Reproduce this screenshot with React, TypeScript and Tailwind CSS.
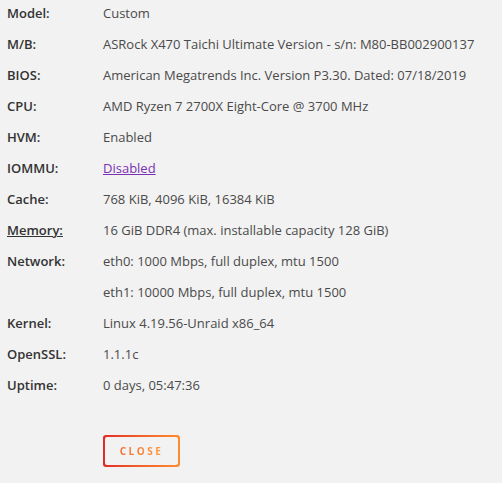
import React from "react";

const rows: [string, React.ReactNode][] = [
  ["Model:", "Custom"],
  ["M/B:", "ASRock X470 Taichi Ultimate Version - s/n: M80-BB002900137"],
  ["BIOS:", "American Megatrends Inc. Version P3.30. Dated: 07/18/2019"],
  ["CPU:", "AMD Ryzen 7 2700X Eight-Core @ 3700 MHz"],
  ["HVM:", "Enabled"],
  ["IOMMU:", <a href="#" className="text-[#7b2fb3] underline">Disabled</a>],
  ["Cache:", "768 KiB, 4096 KiB, 16384 KiB"],
  ["Memory:", "16 GiB DDR4 (max. installable capacity 128 GiB)"],
  ["Network:", "eth0: 1000 Mbps, full duplex, mtu 1500"],
  ["", "eth1: 10000 Mbps, full duplex, mtu 1500"],
  ["Kernel:", "Linux 4.19.56-Unraid x86_64"],
  ["OpenSSL:", "1.1.1c"],
  ["Uptime:", "0 days, 05:47:36"],
];

export default function App() {
  return (
    <div className="w-[502px] h-[483px] bg-[#f2f2f2] font-['Open_Sans',sans-serif] text-[13px] text-[#4a4a4a] overflow-hidden">
      <div className="pl-[7px] -mt-[2px]">
        {rows.map(([label, value], i) => (
          <div key={i} className="flex leading-[31px]">
            <div className={`w-[96px] font-semibold text-[#333] ${label === "Memory:" ? "underline" : ""}`}>
              {label}
            </div>
            <div>{value}</div>
          </div>
        ))}
      </div>
      <div className="pl-[103px] mt-[34px]">
        <div className="inline-block rounded-[3px] p-[2px] bg-gradient-to-r from-[#e22828] to-[#ff8c2f]">
          <button className="w-[73px] h-[28px] rounded-[2px] bg-[#f2f2f2] text-[10px] font-bold tracking-[2.5px] leading-none">
            <span className="bg-gradient-to-r from-[#f26a2e] to-[#ff9a3c] bg-clip-text text-transparent">CLOSE</span>
          </button>
        </div>
      </div>
    </div>
  );
}
